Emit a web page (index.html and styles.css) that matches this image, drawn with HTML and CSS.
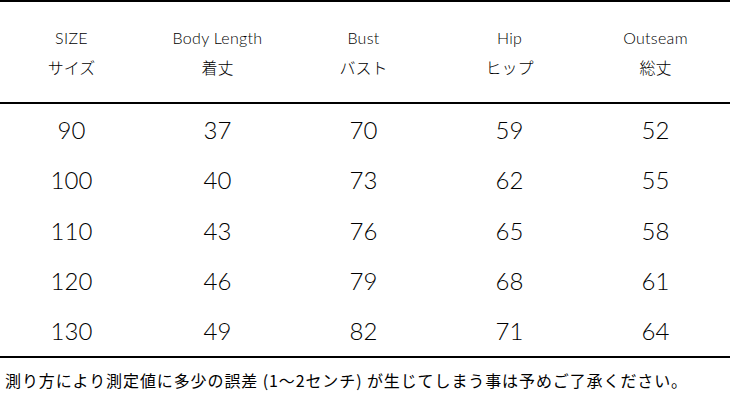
FILE: index.html
```html
<!DOCTYPE html>
<html lang="ja">
<head>
<meta charset="utf-8">
<link rel="stylesheet" href="styles.css">
</head>
<body>
<div class="chart">
  <div class="head">
    <div class="hcell"><span class="en">SIZE</span><span class="ja">サイズ</span></div>
    <div class="hcell"><span class="en">Body Length</span><span class="ja">着丈</span></div>
    <div class="hcell"><span class="en">Bust</span><span class="ja">バスト</span></div>
    <div class="hcell"><span class="en">Hip</span><span class="ja">ヒップ</span></div>
    <div class="hcell"><span class="en">Outseam</span><span class="ja">総丈</span></div>
  </div>
  <div class="body">
    <div class="row"><span>90</span><span>37</span><span>70</span><span>59</span><span>52</span></div>
    <div class="row"><span>100</span><span>40</span><span>73</span><span>62</span><span>55</span></div>
    <div class="row"><span>110</span><span>43</span><span>76</span><span>65</span><span>58</span></div>
    <div class="row"><span>120</span><span>46</span><span>79</span><span>68</span><span>61</span></div>
    <div class="row"><span>130</span><span>49</span><span>82</span><span>71</span><span>64</span></div>
  </div>
  <p class="note">測り方により測定値に多少の誤差 (1～2センチ) が生じてしまう事は予めご了承ください。</p>
</div>
</body>
</html>
```
FILE: styles.css
```css
html, body {
  margin: 0;
  padding: 0;
  background: #fff;
}
body {
  width: 730px;
  height: 400px;
  overflow: hidden;
  font-family: "Lato", "Noto Sans CJK JP", sans-serif;
  color: #000;
}
.chart {
  width: 730px;
}
.head {
  display: grid;
  grid-template-columns: repeat(5, 146px);
  height: 100px;
  border-top: 2px solid #000;
  border-bottom: 2px solid #000;
  align-items: center;
}
.hcell {
  display: flex;
  flex-direction: column;
  align-items: center;
  gap: 9px;
  margin-left: -3px;
}
.en {
  font-size: 16px;
  line-height: 20px;
  font-weight: 300;
  letter-spacing: 0.3px;
}
.ja {
  font-family: "Noto Sans CJK JP", sans-serif;
  font-size: 16px;
  line-height: 20px;
  font-weight: 300;
}
.body {
  height: 252px;
  border-bottom: 2px solid #000;
  display: flex;
  flex-direction: column;
}
.row {
  flex: 1;
  display: grid;
  grid-template-columns: repeat(5, 146px);
  align-items: center;
  justify-items: center;
  font-size: 24px;
  font-weight: 300;
}
.row span {
  margin-left: -3px;
}
.note {
  margin: 0;
  padding: 11px 0 0 5px;
  font-family: "Noto Sans CJK JP", sans-serif;
  font-size: 16px;
  line-height: 22px;
  letter-spacing: 0.9px;
  white-space: nowrap;
}
```
